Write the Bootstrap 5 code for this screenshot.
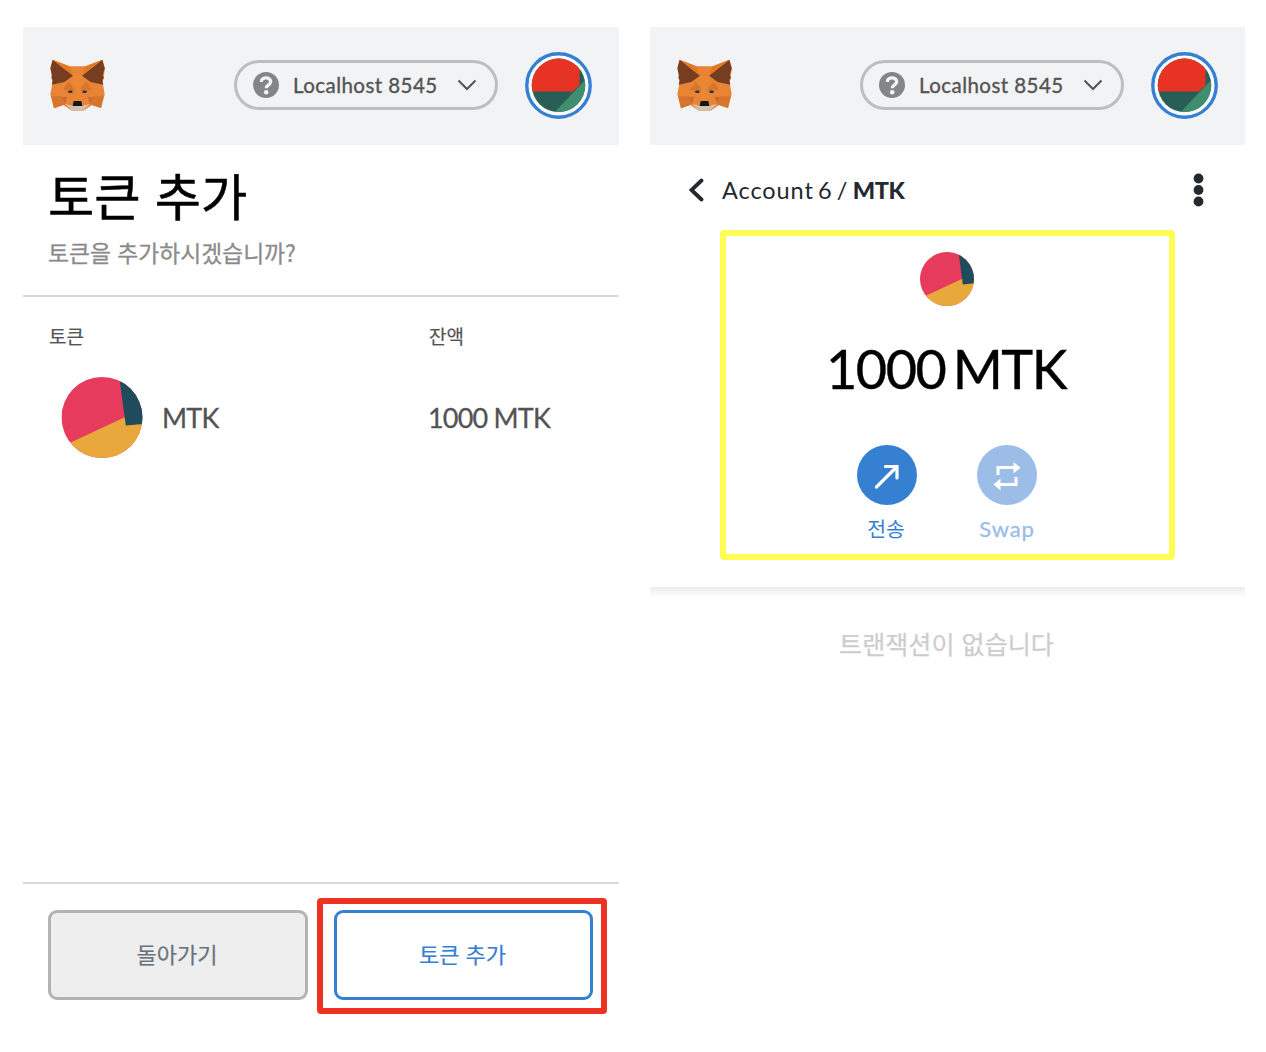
<!DOCTYPE html>
<html lang="ko">
<head>
<meta charset="utf-8">
<meta name="viewport" content="width=device-width, initial-scale=1">
<title>MetaMask – MTK</title>
<link href="https://cdn.jsdelivr.net/npm/bootstrap@5.3.0/dist/css/bootstrap.min.css" rel="stylesheet">
<style>
body{font-family:Lato,"Noto Sans CJK KR",sans-serif;background:#fff;color:#000;width:1266px;height:1052px;overflow:hidden;line-height:1}
.ko{font-family:"Noto Sans CJK KR",sans-serif}
.screens{padding:27px 21px 0 23px;gap:31px}
.pane{width:596px;height:999px}
.pane-right{width:595px}
.topbar{height:118px;background:#f2f3f5;padding:0 27px 2px 26px}
.fox{width:57px;height:52px}
.network{width:264px;height:50px;border:3px solid #bbbec5;border-radius:25px;padding:0 18px 0 16px;font-size:20.5px;color:#535353;margin-right:27px;white-space:nowrap}
.network .net-name{margin:0 0 0 14px;letter-spacing:.45px;-webkit-text-stroke:.35px #535353}
.intro{height:152px;padding:20px 26px 0;border-bottom:2px solid #d6dade}
.intro h1{font-size:50.3px;line-height:58px;margin:0 0 0 -1px;font-weight:400;-webkit-text-stroke:.5px #000}
.intro p{font-size:22.8px;line-height:30px;margin:15px 0 0 -1px;color:#8b8b8b;-webkit-text-stroke:.3px #8b8b8b}
.tokens{padding:27px 26px 0}
.col-token{width:380px}
.tokens .caption-row{font-size:19px;line-height:24px;color:#535353;-webkit-text-stroke:.2px #535353}
.token-row{height:82px;margin-top:28px;font-size:27px;color:#535353;-webkit-text-stroke:.3px #535353}
.token-row .symbol{margin-left:19px;letter-spacing:-.8px}
.token-row .bal{letter-spacing:-.8px;margin-left:-1px}
.token-row .coin{margin-left:12px}
.foot{height:144px;border-top:2px solid #d6dade;padding:14px 12px 0 25px}
.foot .btn{height:90px;border-width:3px;border-radius:9px;font-size:22px;padding:0 2px 4px 0;-webkit-text-stroke:.2px}
.btn-back{width:260px;margin-top:12px;background:#eee;border-color:#b3b3b3;color:#6a737d}
.btn-add{width:259px;background:#fff;border-color:#3680d2;color:#3680d2}
.mark-red{width:290px;height:116px;border:6px solid #ee3224;border-radius:4px;padding:6px 0 0 11px}
.crumb{height:85px;padding:0 41px 0 39px;font-size:23.5px;color:#24292e}
.crumb .trail{margin:3px 0 0 17px;white-space:pre;letter-spacing:.9px;word-spacing:-2.6px}
.crumb .trail b{font-weight:900;letter-spacing:-.4px}
.crumb-in{height:89px}
.mark-yellow{width:455px;height:330px;border:6px solid #fffd54;border-radius:4px;margin:0 auto 0 70px;padding:16px 1px 0 0}
.amount{font-size:54px;line-height:60px;margin:33px 2px 0 0;word-spacing:-5px;letter-spacing:-1.5px;-webkit-text-stroke:.4px #000;white-space:nowrap}
.actions{gap:60px;margin-top:46px}
.act{width:60px;color:#3680d2;font-size:22px;line-height:26px}
.act span{margin-top:11px;white-space:nowrap;-webkit-text-stroke:.3px;letter-spacing:.9px}
.act .ko{font-size:20.5px;margin:10px 2px 0 0;letter-spacing:0;-webkit-text-stroke:0}
.act-off{color:#9bbde8}
.rule{height:11px;margin-top:27px;background:linear-gradient(#ececec,#f3f3f3 35%,#fff)}
.empty{font-size:25.1px;line-height:32px;margin:29px 2px 0 0;color:#cdcdcd;-webkit-text-stroke:.25px #cdcdcd}
</style>
<script src="https://cdn.jsdelivr.net/npm/bootstrap@5.3.0/dist/js/bootstrap.bundle.min.js"></script>
</head>
<body>
<svg width="0" height="0" class="position-absolute" aria-hidden="true">
  <symbol id="fox" viewBox="27 27 171 156">
    <path fill="#e88434" d="M38 29 88 49H137L187 29 195 55 188 98 194 133 183 174 156 165 130 182H96L70 165 42 175 31 133 38 98 32 55Z"/>
    <path fill="#763d21" d="M38 29 99 77 73 96 35 104 38 91 34 83 36 76 31 55ZM187 29 126 77 152 96 190 104 187 91 192 83 188 76 194 55Z"/>
    <path fill="#e27924" d="M38 29 88 49 99 77ZM187 29 137 49 126 77Z"/>
    <path fill="#d8752c" d="M84 96 99 109 105 126 70 119ZM141 96 126 109 120 126 155 119ZM34 139 67 139 76 163 42 175ZM191 139 158 139 149 163 183 174Z"/>
    <path fill="#ca6931" d="M67 142 82 140 75 161ZM158 142 143 140 150 161Z"/>
    <path fill="#ea8735" d="M99 77H126L121 125 126 151H99L104 125Z"/>
    <path fill="#d5bfb2" d="M75 162 99 167H126L150 162 128 182H97Z"/>
    <path fill="#263447" d="M83 124 95 121 98 129 87 129ZM142 124 130 121 127 129 138 129Z"/>
    <path fill="#161616" d="M101 153H124L127 168H98Z"/>
  </symbol>
  <symbol id="coin" viewBox="0 0 80 80">
    <clipPath id="cc"><circle cx="40" cy="40" r="40"/></clipPath>
    <g clip-path="url(#cc)"><path fill="#e63b5d" d="M0 0H80V80H0Z"/><path fill="#e8a83b" d="M0 69 62 40 90 40V90H0Z"/><path fill="#1f4c5c" d="M57 0 63.500 48 90 45.500V0Z"/></g>
  </symbol>
  <symbol id="avatar" viewBox="0 0 67 67">
    <clipPath id="ac"><circle cx="33.500" cy="33.300" r="26.700"/></clipPath>
    <circle cx="33.500" cy="33.500" r="31.700" fill="#fff" stroke="#3680d2" stroke-width="3.400"/>
    <circle cx="33.500" cy="33.500" r="28.500" fill="#f5f5f6"/>
    <g clip-path="url(#ac)"><path fill="#285e55" d="M0 0H67V67H0Z"/><path fill="#e73323" d="M0 0H54.500V33L48 39.500H0Z"/><path fill="#3f8e70" d="M67 20.500 27 63V67H67Z"/></g>
  </symbol>
  <symbol id="help" viewBox="0 0 26 26">
    <circle cx="13" cy="13" r="13" fill="#848587"/><path d="M8.300 9.900C8.500 4.600 17.700 4.600 17.700 9.700 17.700 13 13.300 12.800 13.300 16.200" fill="none" stroke="#f2f3f5" stroke-width="3.300"/><circle cx="13.200" cy="20.200" r="2.300" fill="#f2f3f5"/>
  </symbol>
  <symbol id="down" viewBox="0 0 20 12"><path d="M1.500 1.500 10 10 18.500 1.500" fill="none" stroke="#535353" stroke-width="2"/></symbol>
</svg>
<main class="screens d-flex align-items-start">
  <section class="pane d-flex flex-column">
    <header class="topbar d-flex align-items-center">
      <svg class="fox me-auto"><use href="#fox"/></svg>
      <div class="network d-flex align-items-center"><svg width="26" height="26"><use href="#help"/></svg><span class="net-name">Localhost 8545</span><svg class="ms-auto" width="20" height="12"><use href="#down"/></svg></div>
      <svg width="67" height="67"><use href="#avatar"/></svg>
    </header>
    <div class="intro ko"><h1>토큰 추가</h1><p>토큰을 추가하시겠습니까?</p></div>
    <div class="tokens">
      <div class="caption-row ko d-flex"><div class="col-token">토큰</div><div>잔액</div></div>
      <div class="token-row d-flex align-items-center"><div class="col-token d-flex align-items-center"><svg class="coin" width="82" height="81"><use href="#coin"/></svg><span class="symbol">MTK</span></div><div class="bal">1000 MTK</div></div>
    </div>
    <footer class="foot d-flex justify-content-between align-items-start mt-auto ko">
      <button class="btn btn-back">돌아가기</button>
      <div class="mark-red"><button class="btn btn-add">토큰 추가</button></div>
    </footer>
  </section>
  <section class="pane pane-right">
    <header class="topbar d-flex align-items-center">
      <svg class="fox me-auto"><use href="#fox"/></svg>
      <div class="network d-flex align-items-center"><svg width="26" height="26"><use href="#help"/></svg><span class="net-name">Localhost 8545</span><svg class="ms-auto" width="20" height="12"><use href="#down"/></svg></div>
      <svg width="67" height="67"><use href="#avatar"/></svg>
    </header>
    <nav class="crumb">
      <div class="crumb-in d-flex align-items-center">
        <svg width="16" height="24" viewBox="0 0 16 24"><path d="M12.500 2.500 2.500 12 12.500 21.500" fill="none" stroke="#24292e" stroke-width="3.800" stroke-linecap="round"/></svg>
        <span class="trail">Account 6 / <b>MTK</b></span>
        <svg class="ms-auto" width="11" height="34" fill="#24292e"><circle cx="5.500" cy="5.500" r="4.900"/><circle cx="5.500" cy="17" r="4.900"/><circle cx="5.500" cy="28.500" r="4.900"/></svg>
      </div>
    </nav>
    <div class="mark-yellow d-flex flex-column align-items-center">
      <svg width="54" height="54"><use href="#coin"/></svg>
      <div class="amount">1000 MTK</div>
      <div class="actions d-flex">
        <div class="act d-flex flex-column align-items-center"><svg width="60" height="60"><circle cx="30" cy="30" r="30" fill="#3680d2"/><path d="M19.500 42 40 21.500M28.500 21.500H40V33" fill="none" stroke="#fff" stroke-width="3.200" stroke-linecap="round"/></svg><span class="ko">전송</span></div>
        <div class="act act-off d-flex flex-column align-items-center"><svg width="60" height="60"><circle cx="30" cy="30" r="30" fill="#9bbde8"/><path d="M21 30V22.500H37M39 32V39.500H23" fill="none" stroke="#fff" stroke-width="3"/><path d="M36.500 17 43.500 22.700 36.500 28.500ZM23.500 33.500 16.500 39.500 23.500 45.500Z" fill="#fff"/></svg><span>Swap</span></div>
      </div>
    </div>
    <div class="rule"></div>
    <div class="empty ko text-center">트랜잭션이 없습니다</div>
  </section>
</main>
</body>
</html>
